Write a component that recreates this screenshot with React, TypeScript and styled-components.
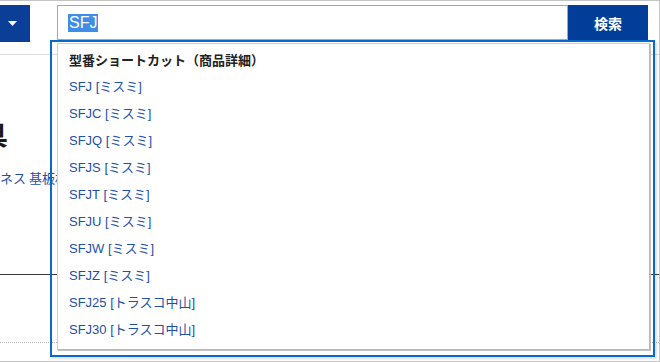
import React from "react";
import styled, { createGlobalStyle } from "styled-components";

const GlobalStyle = createGlobalStyle`
  html, body {
    margin: 0;
    padding: 0;
    background: #ffffff;
  }
  body {
    font-family: "Liberation Sans", "Noto Sans CJK JP", sans-serif;
  }
`;

const Frame = styled.div`
  position: relative;
  width: 660px;
  height: 362px;
  box-sizing: border-box;
  border: 1px solid #c4c4c4;
  border-left: none;
  overflow: hidden;
  background: #ffffff;
`;

const Header = styled.div`
  display: flex;
  align-items: flex-start;
  height: 54px;
  box-sizing: border-box;
  padding-top: 4px;
  border-bottom: 1px solid #dcdcdc;
`;

const CategoryButton = styled.div`
  display: flex;
  align-items: center;
  justify-content: center;
  width: 36px;
  height: 37px;
  margin-left: -6px;
  background: #0a3e97;
`;

const SearchBox = styled.div`
  display: flex;
  align-items: center;
  width: 511px;
  height: 35px;
  margin-left: 27px;
  box-sizing: border-box;
  padding-left: 11px;
  border: 1px solid #86aee2;
  font-size: 16px;
  color: #222222;
`;

const Selected = styled.span`
  background: #3f8de6;
  color: #ffffff;
  padding: 0 1px;
  margin-left: -1px;
  line-height: 18px;
`;

const SearchButton = styled.div`
  display: flex;
  align-items: center;
  justify-content: center;
  width: 80px;
  height: 36px;
  background: #023e98;
  color: #ffffff;
  font-family: "Noto Sans CJK JP", sans-serif;
  font-weight: 700;
  font-size: 14px;
`;

const Content = styled.div`
  display: flex;
  flex-direction: column;
`;

const Title = styled.div`
  margin-top: 64px;
  margin-left: -18px;
  font-family: "Noto Sans CJK JP", sans-serif;
  font-size: 26px;
  font-weight: 700;
  line-height: 30px;
  color: #1a1a1a;
`;

const CategoryLink = styled.div`
  margin-top: 21px;
  margin-left: -26px;
  font-family: "Noto Sans CJK JP", sans-serif;
  font-size: 13px;
  line-height: 16px;
  color: #1d50a8;
  white-space: nowrap;
`;

const Rule = styled.div<{ $gap: number; $dotted?: boolean }>`
  margin-top: ${(p) => p.$gap}px;
  border-top: 1px ${(p) => (p.$dotted ? "dotted #b8b8b8" : "solid #3a3a3a")};
`;

const Dropdown = styled.div`
  position: absolute;
  left: 50px;
  top: 39px;
  width: 605px;
  height: 317px;
  box-sizing: border-box;
  padding: 1px 3px 5px 5px;
  border: 2px solid #0a67cc;
  box-shadow: 2px 2px 2px rgba(0, 0, 0, 0.12);
`;

const Panel = styled.div`
  height: 100%;
  box-sizing: border-box;
  padding: 2px 0 0 11px;
  background: #ffffff;
  border: 1px solid #cfcfcf;
  border-right-color: #b9b9b9;
  border-bottom-color: #b9b9b9;
  box-shadow: 1px 1px 0 #c2c2c2;
`;

const GroupTitle = styled.div`
  line-height: 27px;
  font-family: "Noto Sans CJK JP", sans-serif;
  font-size: 13px;
  font-weight: 700;
  color: #222222;
`;

const Suggestion = styled.div`
  line-height: 27px;
  font-size: 13px;
  color: #1d50a8;
  white-space: nowrap;
`;

const suggestions = [
  "SFJ [ミスミ]",
  "SFJC [ミスミ]",
  "SFJQ [ミスミ]",
  "SFJS [ミスミ]",
  "SFJT [ミスミ]",
  "SFJU [ミスミ]",
  "SFJW [ミスミ]",
  "SFJZ [ミスミ]",
  "SFJ25 [トラスコ中山]",
  "SFJ30 [トラスコ中山]",
];

const App: React.FC = () => (
  <>
    <GlobalStyle />
    <Frame>
      <Header>
        <CategoryButton>
          <svg width="9" height="5" viewBox="0 0 9 5">
            <path d="M0 0 H9 L4.5 5 Z" fill="#ffffff" />
          </svg>
        </CategoryButton>
        <SearchBox>
          <Selected>SFJ</Selected>
        </SearchBox>
        <SearchButton>検索</SearchButton>
      </Header>
      <Content>
        <Title>具</Title>
        <CategoryLink>ハーネス 基板材料</CategoryLink>
        <Rule $gap={88} />
        <Rule $gap={67} $dotted />
      </Content>
      <Dropdown>
        <Panel>
          <GroupTitle>型番ショートカット（商品詳細）</GroupTitle>
          {suggestions.map((s) => (
            <Suggestion key={s}>{s}</Suggestion>
          ))}
        </Panel>
      </Dropdown>
    </Frame>
  </>
);

export default App;
